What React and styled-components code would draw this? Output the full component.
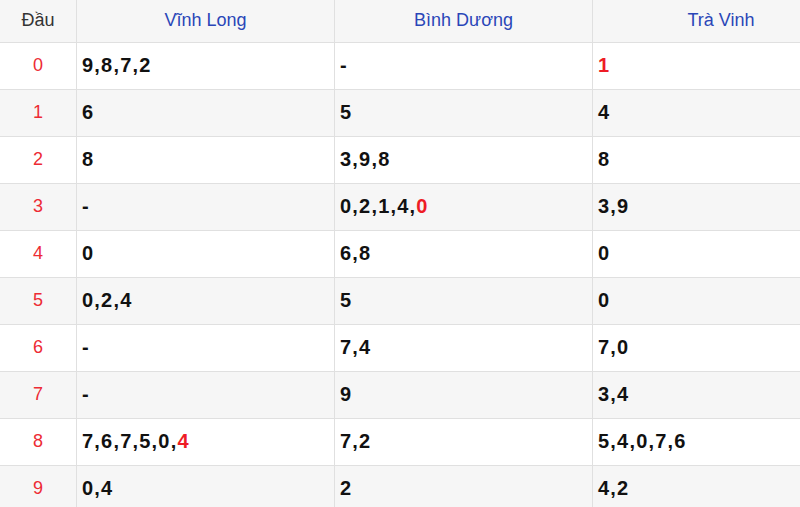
import React from "react";
import styled, { createGlobalStyle } from "styled-components";

const Global = createGlobalStyle`
  html, body { margin: 0; padding: 0; background: #fff; overflow: hidden; }
  body { font-family: "Liberation Sans", Arial, sans-serif; }
`;

const Table = styled.table`
  border-collapse: collapse;
  width: 846px;
  table-layout: fixed;
  font-family: "Liberation Sans", Arial, sans-serif;
  font-size: 18px;
`;

const HeadRow = styled.tr`
  background: #f6f6f6;
  height: 42px;
`;

const Th = styled.th`
  border: 1px solid #e0e0e0;
  border-top: none;
  font-weight: normal;
  text-align: center;
  color: ${(p) => (p.$first ? "#333" : "#2a46b8")};
  width: ${(p) => p.$w}px;
  padding: 0;
  &:first-child { border-left: none; }
`;

const Row = styled.tr`
  height: 47px;
  background: ${(p) => (p.$alt ? "#f6f6f6" : "#fff")};
`;

const HeadCell = styled.td`
  border: 1px solid #e0e0e0;
  border-left: none;
  text-align: center;
  color: #ed2b34;
  padding: 0;
`;

const Cell = styled.td`
  border: 1px solid #e0e0e0;
  font-weight: bold;
  font-size: 20px;
  letter-spacing: 1.2px;
  color: #111;
  padding: 0 0 0 5px;
`;

const Hot = styled.span`
  color: #ee1c25;
`;

const data = [
  [["9,8,7,2"], ["-"], ["", "1"]],
  [["6"], ["5"], ["4"]],
  [["8"], ["3,9,8"], ["8"]],
  [["-"], ["0,2,1,4,", "0"], ["3,9"]],
  [["0"], ["6,8"], ["0"]],
  [["0,2,4"], ["5"], ["0"]],
  [["-"], ["7,4"], ["7,0"]],
  [["-"], ["9"], ["3,4"]],
  [["7,6,7,5,0,", "4"], ["7,2"], ["5,4,0,7,6"]],
  [["0,4"], ["2"], ["4,2"]],
];

export default function App() {
  return (
    <>
      <Global />
      <Table>
        <thead>
          <HeadRow>
            <Th $first $w={76}>Đầu</Th>
            <Th $w={257}>Vĩnh Long</Th>
            <Th $w={257}>Bình Dương</Th>
            <Th $w={256}>Trà Vinh</Th>
          </HeadRow>
        </thead>
        <tbody>
          {data.map((row, i) => (
            <Row key={i} $alt={i % 2 === 1}>
              <HeadCell>{i}</HeadCell>
              {row.map(([plain, hot], j) => (
                <Cell key={j}>
                  {plain}
                  {hot && <Hot>{hot}</Hot>}
                </Cell>
              ))}
            </Row>
          ))}
        </tbody>
      </Table>
    </>
  );
}
